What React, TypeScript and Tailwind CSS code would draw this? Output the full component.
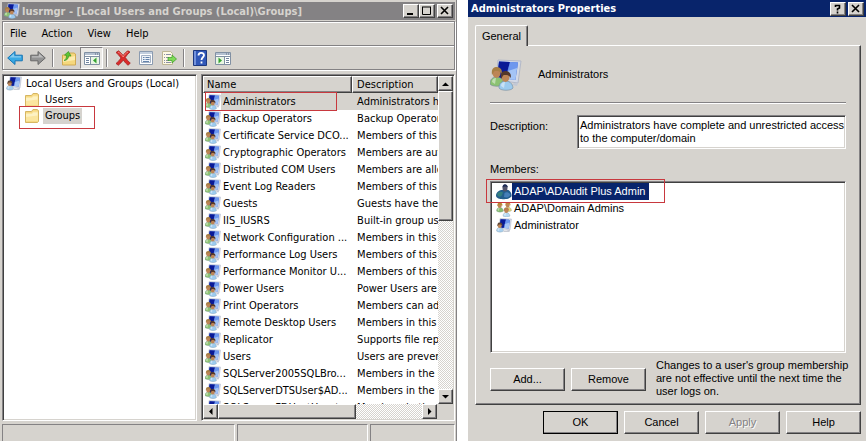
import type { ReactNode } from "react";
import clsx from "clsx";

const raised =
  "bg-[#d6d3ce] border border-t-white border-l-white border-r-[#404040] border-b-[#404040] shadow-[inset_-1px_-1px_0_#848284]";
const sunken =
  "bg-white border border-t-[#848284] border-l-[#848284] border-r-white border-b-white shadow-[inset_1px_1px_0_#404040,inset_-1px_-1px_0_#d6d3ce]";
const checker =
  "bg-[repeating-conic-gradient(#ffffff_0_25%,#d6d3ce_0_50%)] bg-[length:2px_2px]";

const groups = [
  { name: "Administrators", description: "Administrators have" },
  { name: "Backup Operators", description: "Backup Operators can" },
  { name: "Certificate Service DCO...", description: "Members of this group" },
  { name: "Cryptographic Operators", description: "Members are authorized" },
  { name: "Distributed COM Users", description: "Members are allowed" },
  { name: "Event Log Readers", description: "Members of this group" },
  { name: "Guests", description: "Guests have the same" },
  { name: "IIS_IUSRS", description: "Built-in group used" },
  { name: "Network Configuration ...", description: "Members in this group" },
  { name: "Performance Log Users", description: "Members of this group" },
  { name: "Performance Monitor U...", description: "Members of this group" },
  { name: "Power Users", description: "Power Users are" },
  { name: "Print Operators", description: "Members can administer" },
  { name: "Remote Desktop Users", description: "Members in this group" },
  { name: "Replicator", description: "Supports file replication" },
  { name: "Users", description: "Users are prevented" },
  { name: "SQLServer2005SQLBro...", description: "Members in the group" },
  { name: "SQLServerDTSUser$AD...", description: "Members in the group" },
  { name: "SQLServerFDHostUser$...", description: "Members in the group" },
];

const Screen = () => (
  <>
    <path d="M8 1 31 2 28 24 6 21z" fill="#d3d9e6" stroke="#b3b9c8" />
    <path d="M9 2.500 28 3.500 25.500 21 7 18.500z" fill="#3f66d6" />
    <path d="M9 2.500 20 3 15 20 7 18.500z" fill="#0a1a96" />
    <path d="M20 3 28 3.500 27 11 17 15z" fill="#6d97ee" />
    <path d="m18 12 9-3-1.500 12-9-1z" fill="#a4c4f6" />
    <path d="m24 24 4 0-1 3-5-1z" fill="#c2c8d5" />
  </>
);

const Person = ({ x, y, hair, shirt }: { x: number; y: number; hair: string; shirt: string }) => (
  <g transform={`translate(${x} ${y})`}>
    <path d="M0 17c0-5 3-7 6.500-7s7 2 7.500 7c-2 3-12 3-14 0z" fill={shirt} stroke="#71889a" strokeWidth="0.6" />
    <path d="M2 15c0-3 2-4 4-4l-1 6z" fill="#fff" opacity="0.45" />
    <ellipse cx="6.500" cy="6" rx="4" ry="5" fill="#bd8556" />
    <path d="M2 8C1 1 4 0 7 0s6 3 4.500 7C10 3.500 7 4 5 4 3.500 4.500 3.500 6 2 8z" fill={hair} />
  </g>
);

const GroupIcon = ({ className = "size-4" }: { className?: string }) => (
  <svg viewBox="0 0 32 32" className={clsx("shrink-0", className)} aria-hidden="true">
    <Screen />
    <Person x={0} y={8} hair="#a87f45" shirt="#8cc272" />
    <Person x={9} y={12} hair="#54372a" shirt="#9ccbef" />
  </svg>
);

const UserIcon = () => (
  <svg viewBox="0 0 32 32" className="size-4 shrink-0" aria-hidden="true">
    <Screen />
    <Person x={1} y={9} hair="#5e4636" shirt="#a9d0ee" />
    <path d="M15 25h13l-2 3H15z" fill="#c9ccd4" />
  </svg>
);

const DomainGroupIcon = () => (
  <svg viewBox="0 0 32 32" className="size-4 shrink-0" aria-hidden="true">
    <Person x={1} y={3} hair="#b58a2e" shirt="#85bd6b" />
    <Person x={17} y={2} hair="#c08a3c" shirt="#e6d574" />
    <Person x={14} y={13} hair="#b57b4f" shirt="#b5daf3" />
  </svg>
);

const SelectedUserIcon = () => (
  <svg viewBox="0 0 32 32" className="size-4 shrink-0" aria-hidden="true">
    <path d="M0 23C0 16 7 12 13 12h12c4 3 7 7 6 13-5 6-15 6-20 5-6 0-11-3-11-7z" fill="#245e8d" />
    <path d="M2 20c3-5 8-6 12-3l-3 7c-4 3-8 1-9-4z" fill="#35807f" />
    <path d="M17 18c4-3 10-1 12 4-3 5-9 6-13 4z" fill="#467fb8" />
    <ellipse cx="18" cy="8" rx="5" ry="7" fill="#515269" />
    <path d="M13 7c0-8 9-9 11 0-3-3-8-3-11 0z" fill="#1c2b55" />
  </svg>
);

const FolderIcon = () => (
  <svg viewBox="0 0 16 16" className="size-4 shrink-0" aria-hidden="true">
    <path d="M1.500 3.500h6l1.500-2h4l1.500 1v11l-1 1h-12z" fill="#f6d983" stroke="#d6b662" />
    <path d="M2 5h6l1-1.500h5V13H2z" fill="#fbe69f" />
    <path d="M2 6h6l1-1.500h4.500v3L2 9z" fill="#fdf2c4" />
  </svg>
);

const ArrowIcon = ({ color, edge, flip }: { color: string; edge: string; flip?: boolean }) => (
  <svg viewBox="0 0 16 16" className={clsx("size-4", flip && "-scale-x-100")} aria-hidden="true">
    <path d="M.7 8 8 1.500v3.700h7.300v5.600H8v3.700z" fill={color} stroke={edge} />
    <path d="M2.500 7.500 7 3.500v2.700h7v1.300z" fill="#fff" opacity="0.4" />
  </svg>
);

const UpFolderIcon = () => (
  <svg viewBox="0 0 16 16" className="size-4" aria-hidden="true">
    <path d="M1.500 5h6l1.500-2h4l1.500 1v11h-13z" fill="#f5d87d" stroke="#d0aa52" />
    <path d="M2 9 14 6v4l-12 2z" fill="#fcecae" />
    <path d="M3 10.500c3 0 4.500-2 4.500-4.500H10L7.500 1.500 3.500 5l2 .5C5.500 8 5 9 3 10.500z" fill="#5cc534" stroke="#2b8a1d" strokeWidth="0.6" />
  </svg>
);

const PaneIcon = ({ mirrored }: { mirrored?: boolean }) => (
  <svg viewBox="0 0 16 16" className="size-4" aria-hidden="true">
    <path d="M.5 2.500h15v12H.5z" fill="#fff" stroke="#8190a3" />
    <path d="M1 3h14v2H1z" fill="#b5c1d1" />
    <path d="M11 4h1m1 0h1" stroke="#5c6c82" />
    <path d="M1 6.500h14" stroke="#8190a3" />
    <g transform={mirrored ? "matrix(-1 0 0 1 16 0)" : undefined}>
      <path d="M6.500 7v7" stroke="#8190a3" />
      <path d="M2 8.500h3M2 10.500h3M2 12.500h3" stroke="#70849f" />
      <path d="M7 7h8v7H7z" fill="#e9f6e3" />
      <path d="m12.500 7.500-3.500 3 3.500 3z" fill="#35a332" />
    </g>
  </svg>
);

const DeleteIcon = () => (
  <svg viewBox="0 0 16 16" className="size-4" aria-hidden="true">
    <path
      d="M1 2.500 3.500.8C5 2 7 4 8.200 5.500 9.500 3.500 11.500 1.500 13 .8l2 1.200c-2 1.700-3.500 3.500-4.700 5.500 1.500 2 3 4 5 5.700L13 15.300c-1.700-1.300-3.500-3.300-4.700-5.200C7 12 5 14 3.300 15.300L1 13.500c2-1.500 3.700-3.500 5-5.500C4.500 6 3 4 1 2.500z"
      fill="#d92b2b"
      stroke="#9d1919"
      strokeWidth="0.7"
    />
    <path d="M3 2c2 1 4 3 5.200 5 1-2 2.800-4 4.800-5" fill="none" stroke="#f28a80" />
  </svg>
);

const PropertiesIcon = () => (
  <svg viewBox="0 0 16 16" className="size-4" aria-hidden="true">
    <path d="M1.500 1.500h13v13h-13z" fill="#fff" stroke="#8b9bb0" />
    <path d="M2 2h12v2H2z" fill="#c3cfde" />
    <path d="M3.500 5.500h9v7h-9z" fill="#eef3f9" stroke="#a3b1c4" />
    <path d="M5 7.500h1.500M7.500 7.500h4M5 9.500h1.500M7.500 9.500h4M5 11.500h6" stroke="#6483ab" />
  </svg>
);

const ExportIcon = () => (
  <svg viewBox="0 0 16 16" className="size-4" aria-hidden="true">
    <path d="M1.500 1.500h8l2 2v11h-10z" fill="#fdf8e4" stroke="#bdb694" />
    <path d="M3 4.500h1m1 0h5M3 7.500h1m1 0h3M3 10.500h1m1 0h3M3 12.500h1m1 0h5" stroke="#8a8fa5" />
    <path d="M7 7.500h4V5l4.500 4-4.500 4v-2.500H7z" fill="#7fdb58" stroke="#3b9a27" strokeWidth="0.7" />
  </svg>
);

const HelpIcon = () => (
  <svg viewBox="0 0 16 16" className="size-4" aria-hidden="true">
    <path d="M1.500.5h13v15h-13z" fill="#3158b8" stroke="#1d387f" />
    <path d="M2 1h2v14H2z" fill="#7493dc" />
    <path d="M6.500 5.500C6.500 2 12 2 12 5.300c0 2-2.500 2-2.500 4.700M9.500 11.500v2" fill="none" stroke="#fff" strokeWidth="1.800" />
  </svg>
);

const triangles = {
  up: "M3 9h7L6.500 5.500z",
  down: "M3 5h7L6.500 8.500z",
  left: "M8.500 3v7L5 6.500z",
  right: "M5 3v7l3.500-3.500z",
};

const ScrollButton = ({ direction }: { direction: keyof typeof triangles }) => (
  <button type="button" aria-label={`Scroll ${direction}`} className={clsx("size-[15px] shrink-0", raised)}>
    <svg viewBox="0 0 13 13" className="size-full" aria-hidden="true">
      <path d={triangles[direction]} fill="#000" />
    </svg>
  </button>
);

const CaptionButton = ({ label, children }: { label: string; children: ReactNode }) => (
  <button type="button" aria-label={label} className={clsx("flex h-3.5 w-4 items-center justify-center", raised)}>
    <svg viewBox="0 0 12 12" className="size-3" fill="none" stroke="#000" aria-hidden="true">
      {children}
    </svg>
  </button>
);

const ToolButton = ({ label, pressed, children }: { label: string; pressed?: boolean; children: ReactNode }) => (
  <button
    type="button"
    aria-label={label}
    className={clsx(
      "flex h-[22px] w-[23px] items-center justify-center border",
      pressed ? "border-t-[#848284] border-l-[#848284] border-r-white border-b-white bg-[#ebe9e6]" : "border-transparent",
    )}
  >
    {children}
  </button>
);

const ToolSeparator = () => <div className="mx-[3px] h-[18px] w-0.5 border-l border-r border-l-[#848284] border-r-white" />;

const Highlight = ({ className }: { className: string }) => (
  <div className={clsx("pointer-events-none absolute border border-[#c8383e]", className)} />
);

const DialogButton = ({ children, isDefault, disabled }: { children: ReactNode; isDefault?: boolean; disabled?: boolean }) => (
  <button
    type="button"
    disabled={disabled}
    className={clsx(
      "h-[23px] w-[75px] shrink-0",
      raised,
      isDefault && "outline outline-black -outline-offset-1",
      disabled && "text-[#848284] [text-shadow:1px_1px_0_#ffffff]",
    )}
  >
    {children}
  </button>
);

const ConsoleWindow = () => (
  <section className="flex min-h-0 min-w-0 flex-col border-r border-[#848284] bg-[#d6d3ce] pt-0.5 pr-px pl-0.5 font-['DejaVu_Sans_Condensed','DejaVu_Sans',sans-serif] text-[11px] leading-[17px] font-stretch-condensed">
    <header className="flex h-[18px] shrink-0 items-center bg-[#848284] pr-0.5 pl-0.5">
      <GroupIcon />
      <h1 className="min-w-0 flex-1 truncate pl-0.5 font-bold text-[#d6d3ce]">lusrmgr - [Local Users and Groups (Local)\Groups]</h1>
      <CaptionButton label="Minimize">
        <path d="M2 9h6" strokeWidth="2" />
      </CaptionButton>
      <CaptionButton label="Maximize">
        <path d="M1.500 2v7.500h8V2M1 2h9" />
      </CaptionButton>
      <div className="w-0.5" />
      <CaptionButton label="Close">
        <path d="m2 2 7 7m0-7-7 7" strokeWidth="1.600" />
      </CaptionButton>
    </header>

    <div className="mt-px shrink-0 border border-[#848284] shadow-[inset_1px_1px_0_#ffffff,1px_1px_0_#ffffff]">
      <nav className="flex h-6 items-center gap-[15px] border-b border-[#848284] pl-[7px]">
        <button type="button">File</button>
        <button type="button">Action</button>
        <button type="button">View</button>
        <button type="button">Help</button>
      </nav>
      <div className="flex h-[23px] items-center border-t border-white">
        <ToolButton label="Back">
          <ArrowIcon color="#38a9e4" edge="#1875b5" />
        </ToolButton>
        <ToolButton label="Forward">
          <ArrowIcon color="#939393" edge="#686868" flip />
        </ToolButton>
        <ToolSeparator />
        <ToolButton label="Up one level">
          <UpFolderIcon />
        </ToolButton>
        <ToolButton label="Show console tree" pressed>
          <PaneIcon />
        </ToolButton>
        <ToolSeparator />
        <ToolButton label="Delete">
          <DeleteIcon />
        </ToolButton>
        <ToolButton label="Properties">
          <PropertiesIcon />
        </ToolButton>
        <ToolButton label="Export list">
          <ExportIcon />
        </ToolButton>
        <ToolSeparator />
        <ToolButton label="Help">
          <HelpIcon />
        </ToolButton>
        <ToolButton label="Show action pane">
          <PaneIcon mirrored />
        </ToolButton>
      </div>
    </div>

    <div className="mt-1 flex min-h-0 flex-1 gap-1">
      <div className={clsx("min-w-0 flex-[195] p-px leading-4", sunken)}>
        <div className="flex items-center pl-0.5">
          <UserIcon />
          <span className="pl-1 whitespace-nowrap">Local Users and Groups (Local)</span>
        </div>
        <ul>
          <li className="flex items-center pl-5">
            <FolderIcon />
            <span className="ml-[3px] px-0.5">Users</span>
          </li>
          <li className="relative flex items-center pl-5">
            <FolderIcon />
            <span className="ml-[3px] bg-[#d6d3ce] px-0.5">Groups</span>
            <Highlight className="-top-0.5 left-[15px] h-[23px] w-[76px]" />
          </li>
        </ul>
      </div>

      <div className={clsx("flex min-w-0 flex-[255] flex-col p-px", sunken)}>
        <div className="flex min-h-0 flex-1">
          <div className="min-w-0 flex-1 overflow-hidden">
            <table className="w-full table-fixed border-separate border-spacing-0 text-left whitespace-nowrap">
              <thead>
                <tr className="leading-[15px]">
                  <th className={clsx("w-[149px] px-[3px] py-0 font-normal", raised)}>Name</th>
                  <th className={clsx("overflow-hidden px-1 py-0 font-normal", raised)}>Description</th>
                </tr>
              </thead>
              <tbody>
                {groups.map((group, i) => (
                  <tr key={group.name} className="h-[17px]">
                    <td className="relative p-0">
                      <div className="flex items-center pl-0.5">
                        <GroupIcon />
                        <span className={clsx("flex-1 pl-0.5", i === 0 && "bg-[#d6d3ce]")}>{group.name}</span>
                      </div>
                      {i === 0 && <Highlight className="-top-px left-0.5 h-[19px] w-[132px]" />}
                    </td>
                    <td className={clsx("overflow-hidden py-0 pr-0 pl-[5px]", i === 0 && "bg-[#d6d3ce]")}>{group.description}</td>
                  </tr>
                ))}
              </tbody>
            </table>
          </div>
          <div className={clsx("flex w-[15px] shrink-0 flex-col", checker)}>
            <ScrollButton direction="up" />
            <div className={clsx("h-[130px]", raised)} />
            <div className="flex-1" />
            <ScrollButton direction="down" />
          </div>
        </div>
        <div className="flex shrink-0 bg-[#d6d3ce] pr-4">
          <div className={clsx("flex h-[15px] flex-1", checker)}>
            <ScrollButton direction="left" />
            <div className={clsx("w-[138px]", raised)} />
            <div className="flex-1" />
            <ScrollButton direction="right" />
          </div>
        </div>
      </div>
    </div>

    <footer className="mt-[3px] flex h-[17px] shrink-0 gap-0.5">
      <div className="flex-[234] border border-b-0 border-[#848284] border-r-white" />
      <div className="flex-[131] border border-b-0 border-[#848284] border-r-white" />
      <div className="flex-[84] border border-b-0 border-[#848284] border-r-white" />
    </footer>
  </section>
);

const PropertiesDialog = () => (
  <section className="flex min-h-0 min-w-0 flex-col bg-[#d6d3ce] font-['Liberation_Sans',Arial,sans-serif] text-[11px] leading-[13px]">
    <header className="flex h-[17px] shrink-0 items-center gap-0.5 bg-[#08246b] pr-0.5 pl-[3px]">
      <h2 className="flex-1 font-['DejaVu_Sans_Condensed','DejaVu_Sans',sans-serif] font-bold text-white font-stretch-condensed">
        Administrators Properties
      </h2>
      <CaptionButton label="What's this">
        <path d="M3.500 4V2.500h4V5L5.500 6v1.500M5.500 8.500v2" strokeWidth="1.600" />
      </CaptionButton>
      <CaptionButton label="Close">
        <path d="m2 2 7 7m0-7-7 7" strokeWidth="1.600" />
      </CaptionButton>
    </header>

    <div className="flex min-h-0 flex-1 flex-col pt-2 pr-[5px] pb-[7px] pl-[7px]">
      <div role="tablist" className="flex">
        <button
          type="button"
          role="tab"
          aria-selected="true"
          className="relative -mb-px h-[21px] w-[53px] rounded-t-xs border border-b-0 border-white border-r-[#404040] bg-[#d6d3ce] shadow-[inset_-1px_0_0_#848284]"
        >
          General
        </button>
      </div>
      <div
        role="tabpanel"
        className="flex min-h-0 flex-1 flex-col border border-white border-r-[#404040] border-b-[#404040] px-3.5 pt-[13px] pb-1.5 shadow-[inset_-1px_-1px_0_#848284]"
      >
        <div className="flex h-11 items-start border-b border-[#848284] shadow-[0_1px_0_#ffffff]">
          <GroupIcon className="size-8" />
          <span className="pt-[9px] pl-4">Administrators</span>
        </div>

        <div className="mt-3 flex">
          <label htmlFor="description" className="w-[87px] shrink-0 pt-[5px]">
            Description:
          </label>
          <textarea
            id="description"
            className={clsx("h-[34px] min-w-0 flex-1 resize-none overflow-hidden pt-[3px] pl-0.5 whitespace-pre outline-none", sunken)}
            defaultValue={"Administrators have complete and unrestricted access\nto the computer/domain"}
          />
        </div>

        <h3 className="mt-3.5">Members:</h3>
        <div className={clsx("relative mt-[5px] min-h-0 flex-1 p-px", sunken)}>
          <ul className="pl-1">
            <li className="flex h-[17px] items-center">
              <SelectedUserIcon />
              <span className="bg-[#08246b] pr-1 pl-0.5 leading-[17px] text-white">ADAP\ADAudit Plus Admin</span>
            </li>
            <li className="flex h-[17px] items-center">
              <DomainGroupIcon />
              <span className="pl-0.5">ADAP\Domain Admins</span>
            </li>
            <li className="flex h-[17px] items-center">
              <UserIcon />
              <span className="pl-0.5">Administrator</span>
            </li>
          </ul>
          <Highlight className="-top-[3px] -left-[5px] h-6 w-[179px]" />
        </div>

        <div className="mt-1.5 flex h-[39px] items-start gap-1.5">
          <div className="flex gap-1.5 pt-[9px]">
            <DialogButton>Add...</DialogButton>
            <DialogButton>Remove</DialogButton>
          </div>
          <p className="pl-1 whitespace-nowrap">
            Changes to a user's group membership
            <br />
            are not effective until the next time the
            <br />
            user logs on.
          </p>
        </div>
      </div>

      <div className="mt-1.5 flex shrink-0 justify-end gap-1.5">
        <DialogButton isDefault>OK</DialogButton>
        <DialogButton>Cancel</DialogButton>
        <DialogButton disabled>Apply</DialogButton>
        <DialogButton>Help</DialogButton>
      </div>
    </div>
  </section>
);

const App = () => (
  <main className="grid h-screen grid-cols-[457fr_398fr] grid-rows-1 gap-[11px] overflow-hidden bg-white text-black">
    <ConsoleWindow />
    <PropertiesDialog />
  </main>
);

export default App;
